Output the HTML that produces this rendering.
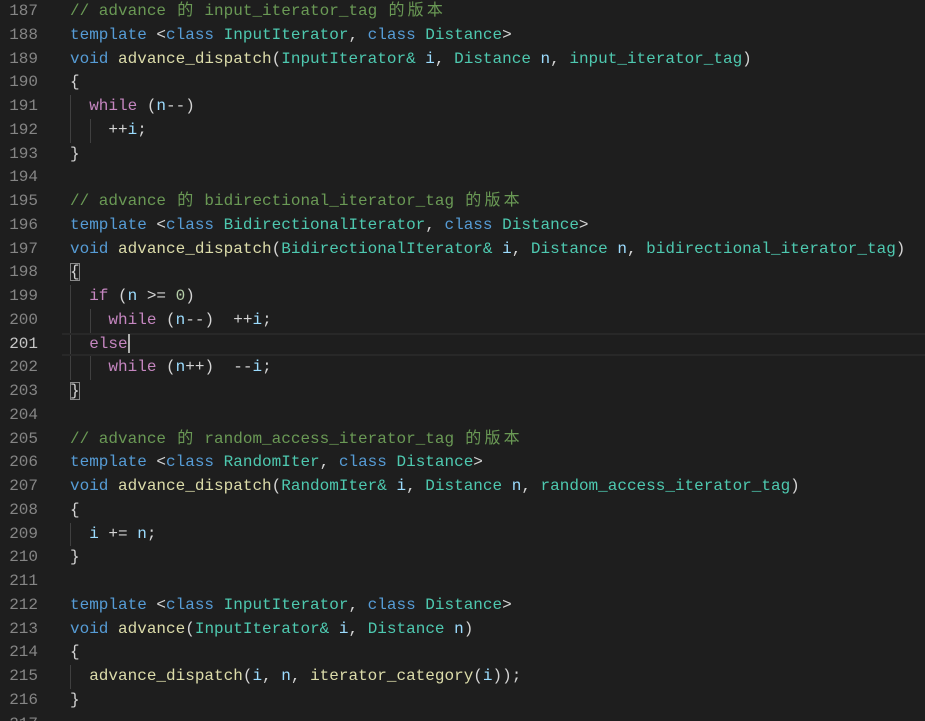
<!DOCTYPE html>
<html><head><meta charset="utf-8"><style>
html,body{margin:0;padding:0;background:#1e1e1e;width:925px;height:721px;overflow:hidden}
.wrap{position:relative;top:0px}
.l{position:relative;height:23.76px;line-height:23.76px;font-family:"Liberation Mono","Noto Sans CJK SC",monospace;font-size:16px;white-space:pre;color:#d4d4d4;overflow:visible}
.n{position:absolute;left:0;top:0;width:38px;text-align:right;color:#858585}
.c{position:absolute;left:70px;top:0;height:23.76px}
.cur{box-sizing:border-box;border-top:2px solid #282828;border-bottom:2px solid #282828;margin-left:62px;}
.cur .n{left:-62px;top:-2px;color:#c6c6c6}
.cur .c{left:8px;top:-2px}
.g{position:absolute;top:0;bottom:0;width:1px;background:#404040}
.k{color:#569cd6}.p{color:#c586c0}.t{color:#4ec9b0}.f{color:#dcdcaa}.v{color:#9cdcfe}.num{color:#b5cea8}.cm{color:#6a9955}
.br{outline:1px solid #888;outline-offset:-1px}
.cj{font-family:"Noto Sans CJK SC",sans-serif;line-height:1;margin:0 1.6px}
.cursor{display:inline-block;width:2px;height:19px;background:#aeafad;vertical-align:middle}
</style></head><body><div class="wrap">
<div class="l"><span class="n">187</span><span class="c cm">// advance <span class="cj">的</span> input_iterator_tag <span class="cj">的</span><span class="cj">版</span><span class="cj">本</span></span></div>
<div class="l"><span class="n">188</span><span class="c"><span class="k">template</span> &lt;<span class="k">class</span> <span class="t">InputIterator</span>, <span class="k">class</span> <span class="t">Distance</span>&gt;</span></div>
<div class="l"><span class="n">189</span><span class="c"><span class="k">void</span> <span class="f">advance_dispatch</span>(<span class="t">InputIterator</span><span class="t">&amp;</span> <span class="v">i</span>, <span class="t">Distance</span> <span class="v">n</span>, <span class="t">input_iterator_tag</span>)</span></div>
<div class="l"><span class="n">190</span><span class="c">{</span></div>
<div class="l"><span class="n">191</span><span class="g" style="left:70px"></span><span class="c">  <span class="p">while</span> (<span class="v">n</span>--)</span></div>
<div class="l"><span class="n">192</span><span class="g" style="left:70px"></span><span class="g" style="left:90px"></span><span class="c">    ++<span class="v">i</span>;</span></div>
<div class="l"><span class="n">193</span><span class="c">}</span></div>
<div class="l"><span class="n">194</span></div>
<div class="l"><span class="n">195</span><span class="c cm">// advance <span class="cj">的</span> bidirectional_iterator_tag <span class="cj">的</span><span class="cj">版</span><span class="cj">本</span></span></div>
<div class="l"><span class="n">196</span><span class="c"><span class="k">template</span> &lt;<span class="k">class</span> <span class="t">BidirectionalIterator</span>, <span class="k">class</span> <span class="t">Distance</span>&gt;</span></div>
<div class="l"><span class="n">197</span><span class="c"><span class="k">void</span> <span class="f">advance_dispatch</span>(<span class="t">BidirectionalIterator</span><span class="t">&amp;</span> <span class="v">i</span>, <span class="t">Distance</span> <span class="v">n</span>, <span class="t">bidirectional_iterator_tag</span>)</span></div>
<div class="l"><span class="n">198</span><span class="c"><span class="br">{</span></span></div>
<div class="l"><span class="n">199</span><span class="g" style="left:70px"></span><span class="c">  <span class="p">if</span> (<span class="v">n</span> &gt;= <span class="num">0</span>)</span></div>
<div class="l"><span class="n">200</span><span class="g" style="left:70px"></span><span class="g" style="left:90px"></span><span class="c">    <span class="p">while</span> (<span class="v">n</span>--)  ++<span class="v">i</span>;</span></div>
<div class="l cur"><span class="n">201</span><span class="g" style="left:8px"></span><span class="c">  <span class="p">else</span><span class="cursor"></span></span></div>
<div class="l"><span class="n">202</span><span class="g" style="left:70px"></span><span class="g" style="left:90px"></span><span class="c">    <span class="p">while</span> (<span class="v">n</span>++)  --<span class="v">i</span>;</span></div>
<div class="l"><span class="n">203</span><span class="c"><span class="br">}</span></span></div>
<div class="l"><span class="n">204</span></div>
<div class="l"><span class="n">205</span><span class="c cm">// advance <span class="cj">的</span> random_access_iterator_tag <span class="cj">的</span><span class="cj">版</span><span class="cj">本</span></span></div>
<div class="l"><span class="n">206</span><span class="c"><span class="k">template</span> &lt;<span class="k">class</span> <span class="t">RandomIter</span>, <span class="k">class</span> <span class="t">Distance</span>&gt;</span></div>
<div class="l"><span class="n">207</span><span class="c"><span class="k">void</span> <span class="f">advance_dispatch</span>(<span class="t">RandomIter</span><span class="t">&amp;</span> <span class="v">i</span>, <span class="t">Distance</span> <span class="v">n</span>, <span class="t">random_access_iterator_tag</span>)</span></div>
<div class="l"><span class="n">208</span><span class="c">{</span></div>
<div class="l"><span class="n">209</span><span class="g" style="left:70px"></span><span class="c">  <span class="v">i</span> += <span class="v">n</span>;</span></div>
<div class="l"><span class="n">210</span><span class="c">}</span></div>
<div class="l"><span class="n">211</span></div>
<div class="l"><span class="n">212</span><span class="c"><span class="k">template</span> &lt;<span class="k">class</span> <span class="t">InputIterator</span>, <span class="k">class</span> <span class="t">Distance</span>&gt;</span></div>
<div class="l"><span class="n">213</span><span class="c"><span class="k">void</span> <span class="f">advance</span>(<span class="t">InputIterator</span><span class="t">&amp;</span> <span class="v">i</span>, <span class="t">Distance</span> <span class="v">n</span>)</span></div>
<div class="l"><span class="n">214</span><span class="c">{</span></div>
<div class="l"><span class="n">215</span><span class="g" style="left:70px"></span><span class="c">  <span class="f">advance_dispatch</span>(<span class="v">i</span>, <span class="v">n</span>, <span class="f">iterator_category</span>(<span class="v">i</span>));</span></div>
<div class="l"><span class="n">216</span><span class="c">}</span></div>
<div class="l"><span class="n">217</span></div>
</div></body></html>
